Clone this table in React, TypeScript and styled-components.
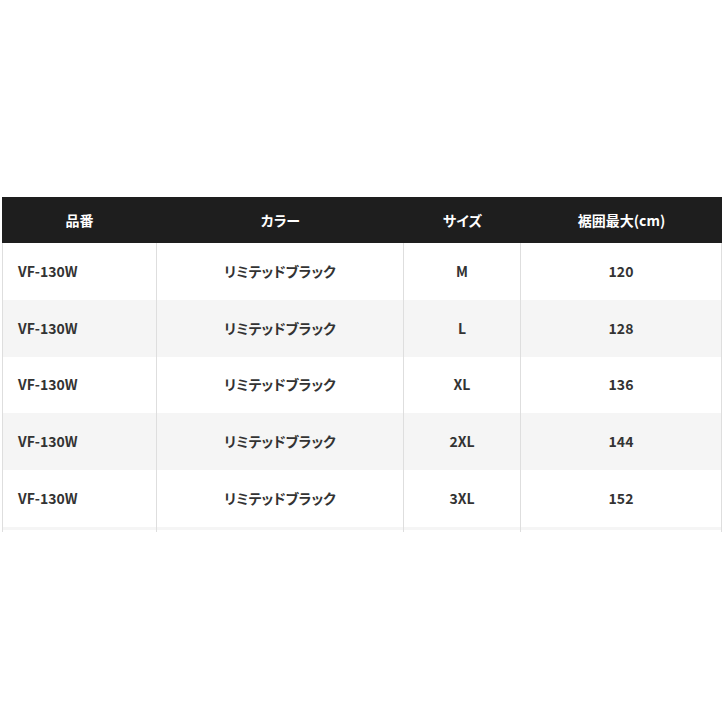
import React from "react";
import styled, { createGlobalStyle } from "styled-components";

const Global = createGlobalStyle`
  html, body { margin: 0; padding: 0; background: #fff; }
  body { font-family: "Noto Sans CJK JP", "Noto Sans", sans-serif; font-feature-settings: "palt"; }
`;

const Page = styled.div`
  padding: 197px 2px 0 2px;
  width: 720px;
`;

const Table = styled.div`
  display: grid;
  grid-template-columns: 155px 247px 117px 201px;
  width: 720px;
`;

const HeadCell = styled.div`
  background: #1e1e1e;
  color: #fff;
  height: 46px;
  display: flex;
  align-items: center;
  justify-content: center;
  font-size: 14px;
  font-weight: 700;
  line-height: 1;
`;

const Cell = styled.div<{ $alt: boolean; $left?: boolean; $first?: boolean }>`
  background: ${(p) => (p.$alt ? "#f5f5f5" : "#fff")};
  height: 56.75px;
  display: flex;
  align-items: center;
  justify-content: ${(p) => (p.$left ? "flex-start" : "center")};
  padding-left: ${(p) => (p.$left ? "15px" : "0")};
  padding-bottom: 1px;
  box-sizing: border-box;
  border-right: 1px solid #dedede;
  border-left: ${(p) => (p.$first ? "1px solid #dedede" : "none")};
  color: #333;
  font-size: 14px;
  font-weight: 700;
  line-height: 1;
`;

const Tail = styled.div<{ $first?: boolean }>`
  height: 5px;
  background: linear-gradient(#f5f5f5 0 3px, #fff 3px);
  border-right: 1px solid #dedede;
  border-left: ${(p) => (p.$first ? "1px solid #dedede" : "none")};
  box-sizing: border-box;
`;

const rows = [
  ["M", "120"],
  ["L", "128"],
  ["XL", "136"],
  ["2XL", "144"],
  ["3XL", "152"],
];

export default function App() {
  return (
    <>
      <Global />
      <Page>
        <Table>
          <HeadCell>品番</HeadCell>
          <HeadCell>カラー</HeadCell>
          <HeadCell>サイズ</HeadCell>
          <HeadCell>裾囲最大(cm)</HeadCell>
          {rows.map(([size, val], i) => {
            const alt = i % 2 === 1;
            return (
              <React.Fragment key={size}>
                <Cell $alt={alt} $left $first>VF-130W</Cell>
                <Cell $alt={alt}>リミテッドブラック</Cell>
                <Cell $alt={alt}>{size}</Cell>
                <Cell $alt={alt}>{val}</Cell>
              </React.Fragment>
            );
          })}
          <Tail $first />
          <Tail />
          <Tail />
          <Tail />
        </Table>
      </Page>
    </>
  );
}
